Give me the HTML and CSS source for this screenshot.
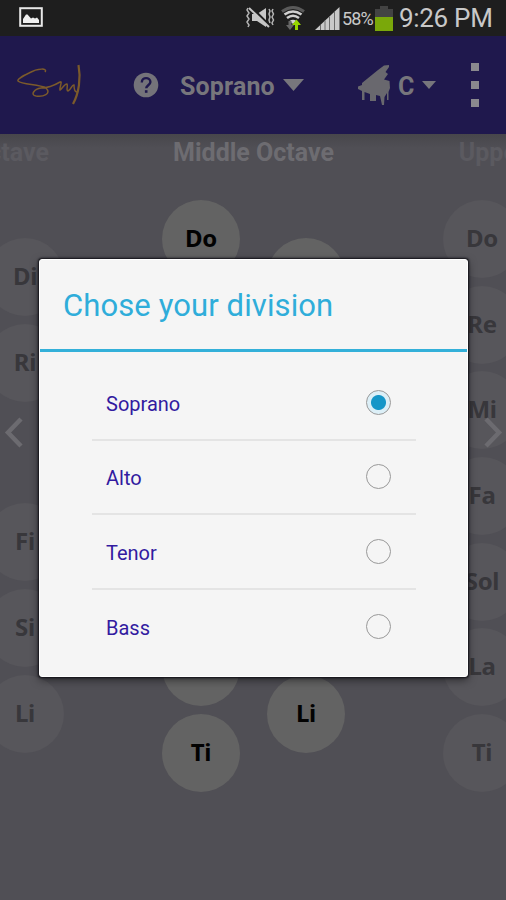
FILE: index.html
```html
<!DOCTYPE html>
<html lang="en">
<head>
    <meta charset="UTF-8">
    <meta name="viewport" content="width=device-width, initial-scale=1.0">
    <title>Solfege - Division</title>
    <link rel="stylesheet" href="styles.css">
</head>
<body>
    <div class="status-bar">
        <svg class="icon-picture" width="24" height="20" viewBox="0 0 24 20">
            <rect x="1.2" y="1.2" width="21.6" height="17.6" fill="none" stroke="#e8e8e8" stroke-width="2"/>
            <path d="M4 16v-4l3-4.500 1.500 0 3.500 4 2-1 2 1 2-1 2 2.500v3z" fill="#f0f0f0"/>
        </svg>
        <div class="status-right">
            <svg class="icon-mute" width="30" height="22" viewBox="0 0 30 22">
                <path d="M7 7h5l9-6v19l-9-6h-5z" fill="#c6c6c6"/>
                <path d="M5 -1l20 20" stroke="#1e1e1e" stroke-width="2.500"/>
                <path d="M4 1l20 19" stroke="#c6c6c6" stroke-width="2"/>
                <path d="M3 1l-1 2 2 3-2 3 2 3-2 3 2 3-1 2M24 2l1 2-1 3 1 3-1 3 1 3M28 2l-1 2 1.500 3-1.500 3 1.500 3-1.500 3 1 2" fill="none" stroke="#b5b5b5" stroke-width="1.500"/>
            </svg>
            <svg class="icon-wifi" width="24" height="26" viewBox="0 0 24 26">
                <path d="M1 6.500q11-8 22 0" fill="none" stroke="#5a5a5a" stroke-width="3"/>
                <path d="M3.500 9.500q8.500-6 17 0M6 13q6-4.500 12 0" fill="none" stroke="#d0d0d0" stroke-width="2.600"/>
                <path d="M8.500 16q3.500-2.500 7 0l-3.500 3z" fill="#d0d0d0"/>
                <path d="M7.500 16h3v4h2.500l-4 5-4-5h2.500z" fill="#666"/>
                <path d="M15.500 14.500l4.500 5.500h-3v5h-3v-5h-3z" fill="#96d500"/>
            </svg>
            <svg class="icon-signal" width="25" height="24" viewBox="0 0 25 24">
                <path d="M0 23L24.500 0v23z" fill="#c9c9c9"/>
                <path d="M5.500 18v5M10 13.500v9.500M14.500 9.500v13.500M19.500 5v18" stroke="#6b6b6b" stroke-width="1"/>
            </svg>
            <span class="battery-text">58%</span>
            <svg class="icon-battery" width="18" height="25" viewBox="0 0 18 25">
                <path d="M0 3h5v-3h8v3h5v8h-18z" fill="#434343"/>
                <path d="M0 11h18v14h-18z" fill="#7aa80a"/>
            </svg>
            <span class="clock">9:26 PM</span>
        </div>
    </div>

    <div class="app-bar">
        <svg class="logo" width="66" height="42" viewBox="0 0 66 42">
            <path d="M28 8C31 4 21 4 12 9C6 12 0 15 1 17C5 21 22 20 29 24C35 30 26 33 19 32C13 31 17 25 24 24C32 24 38 21 43 18C46 16 42 25 43 26C45 25 48 19 50 20C51 21 49 27 51 27C54 26 55 20 57 21C57 24 57 28 60 28" fill="none" stroke="#7b5a2b" stroke-width="1.500"/>
            <path d="M61.500 1C64 14 62 29 56 40" fill="none" stroke="#7b5a2b" stroke-width="2.200"/>
        </svg>
        <svg class="help" width="26" height="26" viewBox="0 0 26 26">
            <circle cx="13" cy="13" r="12.300" fill="#74737a"/>
            <path d="M8.800 10.500c0-6 8.600-5.500 8.600-.5 0 3-4.200 3.500-4.200 6.300" fill="none" stroke="#1f184d" stroke-width="2.400"/>
            <rect x="11.900" y="18.200" width="2.600" height="2.600" fill="#1f184d"/>
        </svg>
        <div class="voice">
            <span>Soprano</span>
            <svg width="21" height="12" viewBox="0 0 21 12"><path d="M0 0h21l-10.500 12z" fill="#77767c"/></svg>
        </div>
        <div class="key">
            <svg class="piano" width="33" height="42" viewBox="0 0 33 42">
                <path d="M31 1L26 1.500L20 6L4 19V21L0 22.500V25L4 27V36H6.500V28L12 30V37H18V31L22 32L24 41H26L26.500 33L29 29V36H30.500V28L32 24L31.500 17L26 15.500L30 10L27.500 8L31 3z" fill="#69686e"/>
            </svg>
            <span>C</span>
            <svg width="14" height="8" viewBox="0 0 14 8"><path d="M0 0h14l-7 8z" fill="#77767c"/></svg>
        </div>
        <div class="menu-dots"><i></i><i></i><i></i></div>
    </div>

    <div class="stage">
        <div class="octaves">
            <div class="octave side">
                <h2>Lower Octave</h2>
                <div class="notes">
                    <div class="column"></div>
                    <div class="column chromatic">
                        <div class="note">Di</div>
                        <div class="note">Ri</div>
                        <div class="note after-gap">Fi</div>
                        <div class="note">Si</div>
                        <div class="note">Li</div>
                    </div>
                </div>
            </div>
            <div class="octave">
                <h2>Middle Octave</h2>
                <div class="notes">
                    <div class="column">
                        <div class="note">Do</div>
                        <div class="note"></div>
                        <div class="note"></div>
                        <div class="note"></div>
                        <div class="note"></div>
                        <div class="note"></div>
                        <div class="note">Ti</div>
                    </div>
                    <div class="column chromatic">
                        <div class="note"></div>
                        <div class="note"></div>
                        <div class="note after-gap"></div>
                        <div class="note"></div>
                        <div class="note">Li</div>
                    </div>
                </div>
            </div>
            <div class="octave side">
                <h2>Upper Octave</h2>
                <div class="notes">
                    <div class="column">
                        <div class="note">Do</div>
                        <div class="note">Re</div>
                        <div class="note">Mi</div>
                        <div class="note">Fa</div>
                        <div class="note">Sol</div>
                        <div class="note">La</div>
                        <div class="note">Ti</div>
                    </div>
                </div>
            </div>
        </div>
        <svg class="arrow prev" width="20" height="32" viewBox="0 0 20 32"><path d="M17 2L4 15.500L17 29" fill="none" stroke="#6c6b70" stroke-width="4.500"/></svg>
        <svg class="arrow next" width="20" height="32" viewBox="0 0 20 32"><path d="M3 2L16 15.500L3 29" fill="none" stroke="#6c6b70" stroke-width="4.500"/></svg>
    </div>

    <div class="dialog">
        <h1>Chose your division</h1>
        <div class="options">
            <div class="option"><span>Soprano</span><div class="radio checked"></div></div>
            <div class="option"><span>Alto</span><div class="radio"></div></div>
            <div class="option"><span>Tenor</span><div class="radio"></div></div>
            <div class="option"><span>Bass</span><div class="radio"></div></div>
        </div>
    </div>
</body>
</html>
```
FILE: styles.css
```css
* {
    box-sizing: border-box;
}

body {
    margin: 0;
    height: 900px;
    display: flex;
    flex-direction: column;
    position: relative;
    overflow: hidden;
    font-family: Roboto, sans-serif;
    background: #504f55;
}

h1,
h2 {
    margin: 0;
}

svg {
    display: block;
    flex: none;
}

/* status bar */
.status-bar {
    height: 36px;
    flex: none;
    display: flex;
    align-items: center;
    justify-content: space-between;
    padding: 0 15px 0 19px;
    background: #1e1e1e;
    color: #c8c8c8;
}

.icon-picture {
    margin-top: -2px;
}

.status-right {
    display: flex;
    align-items: center;
}

.icon-wifi {
    margin-left: 6px;
    margin-top: -1px;
}

.icon-signal {
    margin-left: 10px;
    margin-top: 2px;
}

.battery-text {
    font-size: 18px;
    width: 31px;
    margin-left: 2px;
    letter-spacing: -0.9px;
}

.icon-battery {
    margin-left: 2px;
}

.clock {
    font-size: 26px;
    line-height: 36px;
    width: 92px;
    margin-left: 6px;
    letter-spacing: -0.3px;
    white-space: nowrap;
}

/* app bar */
.app-bar {
    height: 98px;
    flex: none;
    display: flex;
    align-items: center;
    padding: 0 27px 0 17px;
    background: #1f184d;
    color: #77767c;
    font-size: 25px;
    font-weight: bold;
}

.app-bar span {
    padding-top: 2px;
}

.help {
    margin-left: 50px;
}

.voice {
    display: flex;
    align-items: center;
    margin-left: 21px;
    gap: 8px;
}

.voice span {
    width: 95px;
    letter-spacing: 0.15px;
}

.key {
    display: flex;
    align-items: center;
    margin-left: 54px;
}

.key span {
    width: 16px;
    margin: 0 8px 0 7px;
}

.menu-dots {
    display: flex;
    flex-direction: column;
    gap: 10px;
    margin-left: auto;
}

.menu-dots i {
    width: 8px;
    height: 8px;
    background: #8a898e;
}

/* note board */
.stage {
    flex: 1;
    position: relative;
    overflow: hidden;
    background: linear-gradient(#47464b, #504f55 14px);
}

/* the middle octave is centred, its neighbours run off both edges */
.octaves {
    display: flex;
    width: 843px;
    margin-left: -168px;
}

.octave {
    width: 281px;
    flex: none;
}

.octave h2 {
    height: 66px;
    padding-top: 4px;
    text-align: center;
    font-size: 25px;
    line-height: 30px;
    color: #6d6c71;
}

.octave.side h2 {
    color: #5b5a60;
}

.notes {
    display: flex;
    gap: 27px;
    padding-left: 49px;
}

.column {
    width: 78px;
    display: flex;
    flex-direction: column;
    gap: 7.7px;
}

.column.chromatic {
    padding-top: 38px;
}

.note {
    height: 78px;
    flex: none;
    border-radius: 50%;
    background: #636363;
    color: #020202;
    font-family: "Noto Sans", sans-serif;
    font-size: 24px;
    font-weight: bold;
    line-height: 76px;
    letter-spacing: -0.3px;
    text-align: center;
}

.side .note {
    background: #57565b;
    color: #38373b;
}

.note.after-gap {
    margin-top: 94px;
}

.arrow {
    position: absolute;
    top: 283px;
}

.prev {
    left: 4px;
}

.next {
    right: 3px;
}

/* division dialog */
.dialog {
    position: absolute;
    left: 39px;
    top: 259px;
    width: 429px;
    height: 418px;
    border: 1px solid #fff;
    border-radius: 3px;
    background: #f5f5f5;
    box-shadow: 0 0 2px 1px #111017, 0 3px 8px rgba(0, 0, 0, 0.5);
}

.dialog h1 {
    height: 92px;
    padding-left: 23px;
    border-bottom: 3px solid #33b0d9;
    font-size: 31px;
    font-weight: normal;
    letter-spacing: 0.1px;
    line-height: 91px;
    color: #2fadda;
}

.options {
    margin: 14px 51px 0 52px;
}

.option {
    height: 74.600px;
    display: flex;
    align-items: center;
    justify-content: space-between;
    padding: 0 25px 0 14px;
    border-bottom: 2px solid #e4e4e4;
    font-size: 20px;
    color: #321ba0;
}

.option span {
    padding-top: 3px;
}

.option:last-child {
    height: 72.600px;
    border-bottom: none;
}

.radio {
    width: 25px;
    height: 25px;
    border: 1.500px solid #999;
    border-radius: 50%;
}

.radio.checked {
    background: radial-gradient(circle, #1596c8 7px, #dceff7 8px);
}
```
